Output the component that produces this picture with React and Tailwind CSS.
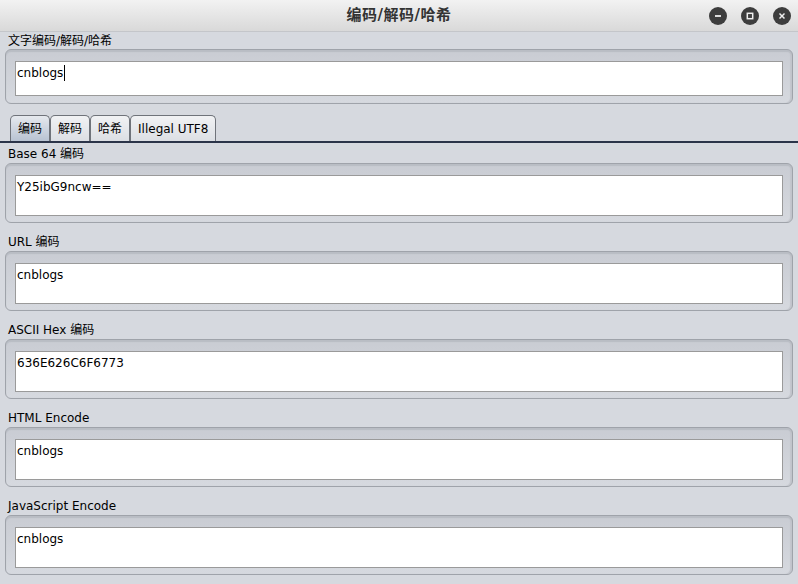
const FONT = { fontFamily: '"DejaVu Sans", "Noto Sans CJK SC", sans-serif' }

const sections = [
  { label: 'Base 64 编码', value: 'Y25ibG9ncw==' },
  { label: 'URL 编码', value: 'cnblogs' },
  { label: 'ASCII Hex 编码', value: '636E626C6F6773' },
  { label: 'HTML Encode', value: 'cnblogs' },
  { label: 'JavaScript Encode', value: 'cnblogs' },
]

const tabs = ['编码', '解码', '哈希', 'Illegal UTF8']

const WinButton = ({ children }) => (
  <div className="w-[18px] h-[18px] rounded-full bg-[#3d3d3d] flex items-center justify-center">
    <svg width="10" height="10" viewBox="0 0 10 10" fill="none" stroke="#eeeeee" strokeWidth="1.8">
      {children}
    </svg>
  </div>
)

const FieldBox = ({ height, inner, children }) => (
  <div
    className="mx-[5px] rounded-[6px] border border-[#9fa3aa] bg-gradient-to-b from-[#c9ccd3] to-[#d6d9df] pl-[9px] pr-[9px] pt-[11px] shadow-[inset_0_2px_1px_#b9bdc4,inset_-2px_0_1px_#c2c5cc]"
    style={{ height }}
  >
    <div
      className="border border-[#9a9a9a] bg-white pl-[1px] pt-[3px] text-[12px] leading-[16px] text-black"
      style={{ height: inner }}
    >
      {children}
    </div>
  </div>
)

export default function App() {
  return (
    <div className="w-[798px] h-[584px] overflow-hidden bg-[#d6d9df] flex flex-col" style={FONT}>
      {/* title bar */}
      <div className="relative h-[32px] shrink-0 bg-gradient-to-b from-[#f2f2f2] to-[#d9d9d9] border-b border-[#c4c6ca] flex items-center justify-center">
        <span className="text-[15px] font-bold text-[#333] tracking-[0.5px]">编码/解码/哈希</span>
        <div className="absolute right-[7px] top-[7px] flex gap-[14px]">
          <WinButton>
            <line x1="2" y1="5" x2="8" y2="5" />
          </WinButton>
          <WinButton>
            <rect x="2.3" y="2.3" width="5.4" height="5.4" strokeWidth="1.5" />
          </WinButton>
          <WinButton>
            <line x1="2.5" y1="2.5" x2="7.5" y2="7.5" strokeWidth="1.5" />
            <line x1="7.5" y1="2.5" x2="2.5" y2="7.5" strokeWidth="1.5" />
          </WinButton>
        </div>
      </div>

      {/* input */}
      <div className="h-[17px] pl-[8px] pt-[2px] text-[12px] leading-[15px] text-black">文字编码/解码/哈希</div>
      <FieldBox height={55} inner={35}>
        <span className="inline-flex items-center">
          cnblogs
          <span className="inline-block w-[1px] h-[16px] bg-black ml-[1px]" />
        </span>
      </FieldBox>

      {/* tabs */}
      <div className="mt-[11px] h-[28px] border-b-2 border-[#2b3449] flex items-end pl-[10px]">
        {tabs.map((t, i) => (
          <div
            key={t}
            className={`h-[26px] px-[7px] min-w-[40px] rounded-t-[5px] border border-b-0 border-[#6f737a] text-[12px] leading-[24px] text-black flex items-center justify-center ${
              i === 0
                ? 'bg-gradient-to-b from-[#e6e9ee] to-[#b8c3d2]'
                : 'bg-gradient-to-b from-[#f1f2f4] to-[#dcdfe4]'
            }`}
          >
            {t}
          </div>
        ))}
      </div>

      {/* outputs */}
      {sections.map((s) => (
        <div key={s.label} className="mb-[8px]">
          <div className="h-[20px] pl-[8px] pt-[3px] text-[12px] leading-[17px] text-black">{s.label}</div>
          <FieldBox height={60} inner={41}>
            {s.value}
          </FieldBox>
        </div>
      ))}
    </div>
  )
}
